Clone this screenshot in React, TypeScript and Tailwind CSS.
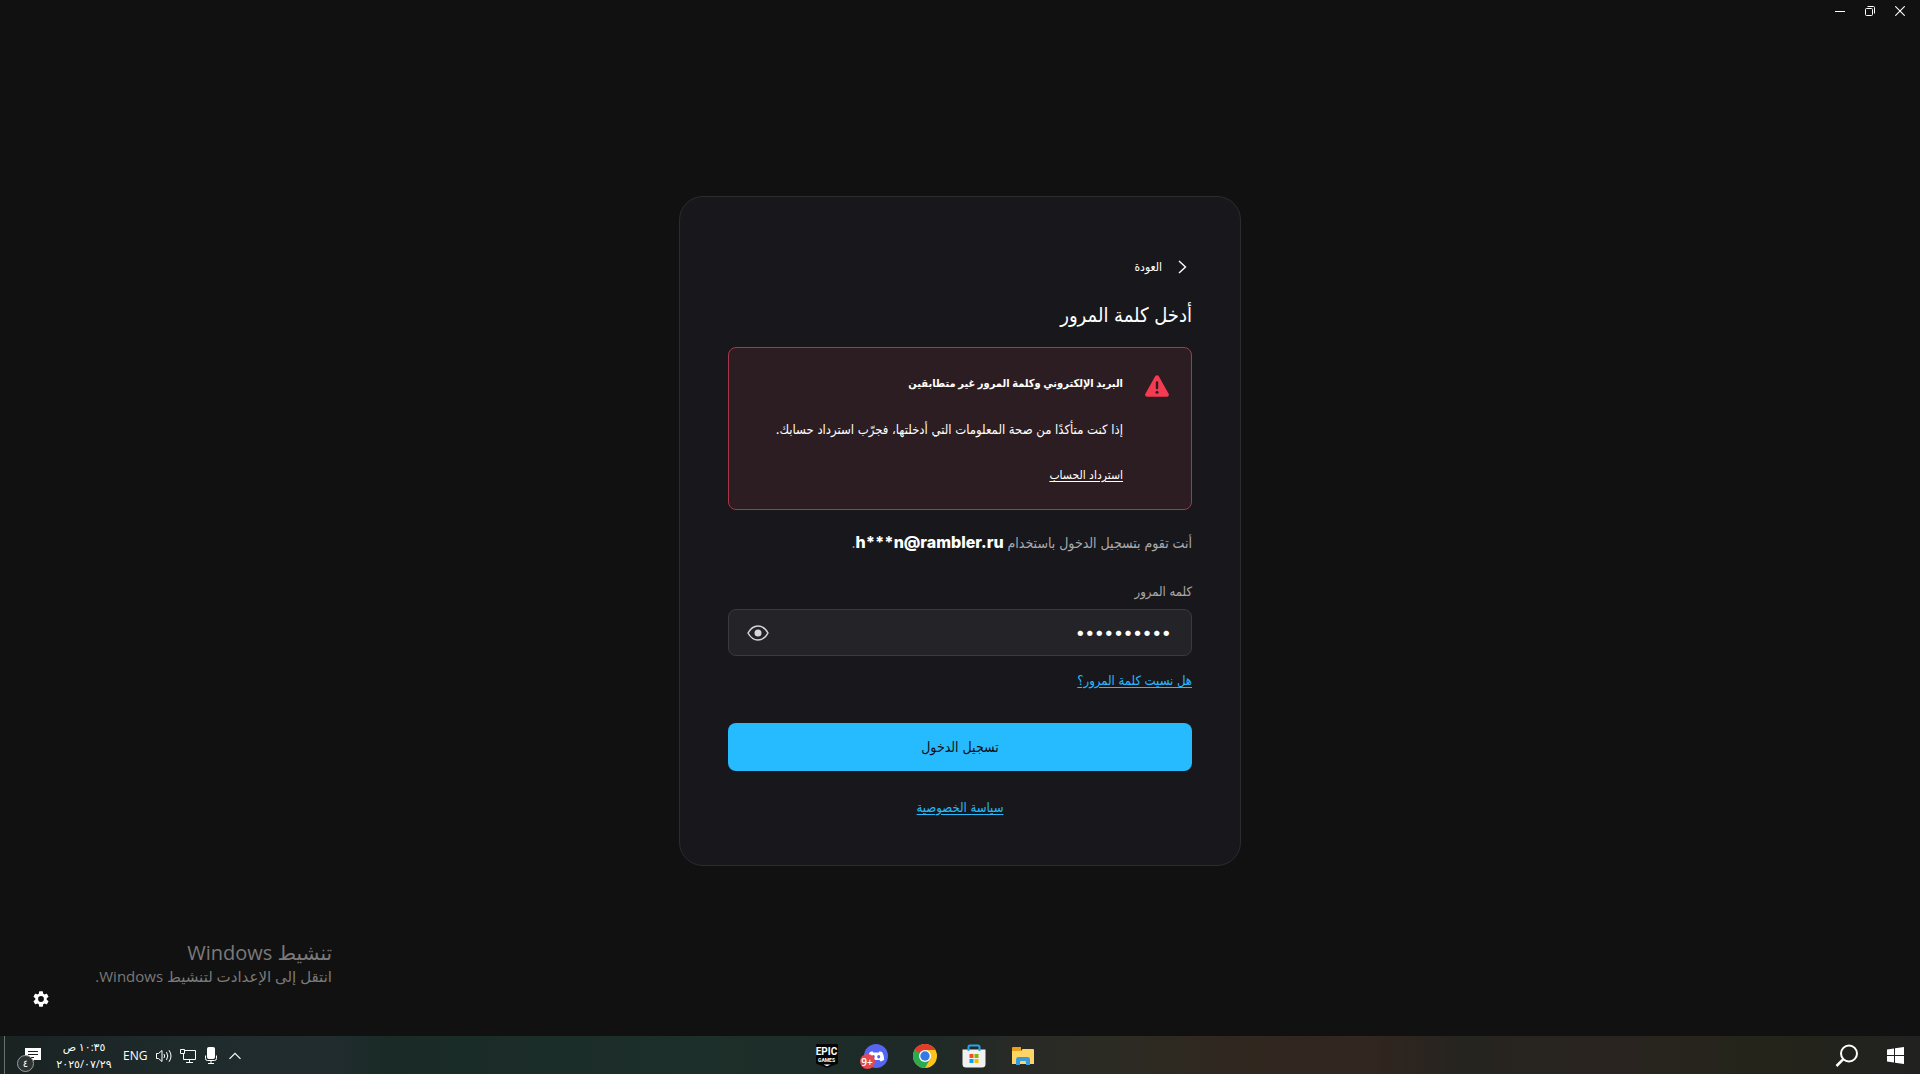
import { useState, type ReactNode } from "react";

const ARABIC = "font-['Inter','DejaVu_Sans_Condensed','DejaVu_Sans',sans-serif]";
const SEGOE = "font-['Open_Sans','DejaVu_Sans',sans-serif]";

function TitleBar() {
  return (
    <header dir="ltr" className="flex h-[22px] items-center justify-end gap-5 pr-[15px] text-white">
      <button type="button" aria-label="Minimize">
        <svg width="10" height="10" viewBox="0 0 10 10" fill="none" stroke="currentColor">
          <path d="M0 5.5h10" />
        </svg>
      </button>
      <button type="button" aria-label="Restore">
        <svg width="10" height="10" viewBox="0 0 10 10" fill="none" stroke="currentColor">
          <rect x="0.5" y="2.5" width="7" height="7" rx="1" />
          <path d="M2.5 0.5h6a1 1 0 0 1 1 1v6" />
        </svg>
      </button>
      <button type="button" aria-label="Close">
        <svg width="10" height="10" viewBox="0 0 10 10" fill="none" stroke="currentColor" strokeWidth="1.1">
          <path d="M0.3 0.3l9.4 9.4M9.7 0.3L0.3 9.7" />
        </svg>
      </button>
    </header>
  );
}

function WarningIcon() {
  return (
    <svg className="shrink-0" width="24" height="22" viewBox="0 0 24 22" aria-hidden="true">
      <path d="M10.3 1.1a2 2 0 0 1 3.4 0l9.9 17.7a2 2 0 0 1-1.7 3H2.1a2 2 0 0 1-1.7-3z" fill="#f43b52" />
      <path d="M12 7.5v5.5" stroke="#2c1d22" strokeWidth="2.4" strokeLinecap="round" />
      <circle cx="12" cy="17.2" r="1.5" fill="#2c1d22" />
    </svg>
  );
}

function Alert() {
  return (
    <section role="alert" className="mt-[15px] flex gap-[22px] rounded-lg border border-[#a8374a] bg-[#2b1d22] px-[22px] pt-[23px] pb-[22px] text-white">
      <div className="pt-1">
        <WarningIcon />
      </div>
      <div className="flex flex-col items-start gap-[22px] text-[13px] leading-6">
        <h2 className="text-[11px] leading-6 font-bold">البريد الإلكتروني وكلمة المرور غير متطابقين</h2>
        <p>إذا كنت متأكدًا من صحة المعلومات التي أدخلتها، فجرّب استرداد حسابك.</p>
        <a href="#recover" className="text-xs leading-6 underline underline-offset-2">استرداد الحساب</a>
      </div>
    </section>
  );
}

function LoginCard() {
  const [password, setPassword] = useState("password12");
  const [visible, setVisible] = useState(false);
  return (
    <form
      dir="rtl"
      onSubmit={(e) => e.preventDefault()}
      className={`flex w-full max-w-[562px] flex-col rounded-3xl border border-[#2c2c30] bg-[#18181c] px-12 pt-[58px] pb-[46px] ${ARABIC}`}
    >
      <button type="button" className="flex items-center gap-4 self-start pr-[5px] text-xs leading-6 text-white">
        <svg width="9" height="14" viewBox="0 0 9 14" fill="none" stroke="currentColor" strokeWidth="1.4" aria-hidden="true">
          <path d="M1 1l6.5 6L1 13" />
        </svg>
        العودة
      </button>
      <h1 className="mt-[19px] text-xl leading-[34px] text-white">أدخل كلمة المرور</h1>
      <Alert />
      <p className="mt-5 text-sm leading-6 text-[#a9a9ad]">
        أنت تقوم بتسجيل الدخول باستخدام <bdi className="text-base leading-6 font-extrabold text-white">h***n@rambler.ru</bdi>.
      </p>
      <label htmlFor="password" className="mt-6 text-[13px] leading-6 text-[#a9a9ad]">كلمه المرور</label>
      <div className="mt-[6px] flex h-[47px] items-center rounded-lg border border-[#3a3a3f] bg-[#242428] pr-5 pl-[18px]">
        <input
          id="password"
          type={visible ? "text" : "password"}
          value={password}
          onChange={(e) => setPassword(e.target.value)}
          className="min-w-0 flex-1 bg-transparent text-[17px] text-white outline-none"
        />
        <button type="button" aria-label="إظهار كلمة المرور" onClick={() => setVisible(!visible)} className="text-[#d6d6d8]">
          <svg width="22" height="16" viewBox="0 0 22 16" fill="none" stroke="currentColor" strokeWidth="1.5">
            <path d="M1 8C3.5 3.5 7 1 11 1s7.500 2.500 10 7c-2.500 4.500-6 7-10 7S3.500 12.500 1 8z" strokeLinejoin="round" />
            <circle cx="11" cy="8" r="3.5" fill="currentColor" stroke="none" />
          </svg>
        </button>
      </div>
      <a href="#forgot" className="mt-3 self-start text-[13px] leading-6 text-[#26bbff] underline underline-offset-2">هل نسيت كلمة المرور؟</a>
      <button type="submit" className="mt-[31px] h-12 rounded-lg bg-[#26bbff] text-sm text-[#101014]">تسجيل الدخول</button>
      <a href="#privacy" className="mt-6 self-center text-[13px] leading-6 text-[#26bbff] underline underline-offset-2">سياسة الخصوصية</a>
    </form>
  );
}

function ActivationNotice() {
  return (
    <aside className={`absolute bottom-[29px] left-8 flex w-[300px] flex-col gap-[3px] text-[#7a7a7a] ${SEGOE}`}>
      <div dir="rtl">
        <p className="text-xl leading-[22px]">تنشيط Windows</p>
        <p className="text-[15px] leading-6">انتقل إلى الإعدادت لتنشيط Windows.</p>
      </div>
      <button type="button" aria-label="الإعدادات" className="ml-px self-start text-white">
        <svg width="16" height="16" viewBox="2 2 20 20" fill="currentColor">
          <path d="M19.14 12.94c.04-.3.06-.61.06-.94s-.02-.64-.07-.94l2.03-1.58a.49.49 0 0 0 .12-.61l-1.92-3.32a.49.49 0 0 0-.59-.22l-2.39.96a7 7 0 0 0-1.62-.94l-.36-2.54A.48.48 0 0 0 13.92 2.4h-3.84a.47.47 0 0 0-.47.41l-.36 2.54c-.59.24-1.13.57-1.62.94l-2.39-.96a.48.48 0 0 0-.59.22L2.74 8.87a.47.47 0 0 0 .12.61l2.03 1.58c-.05.3-.09.63-.09.94s.02.64.07.94l-2.03 1.58a.49.49 0 0 0-.12.61l1.92 3.32c.12.22.37.29.59.22l2.39-.96c.5.38 1.03.7 1.62.94l.36 2.54c.05.24.24.41.48.41h3.84c.24 0 .44-.17.47-.41l.36-2.54a7 7 0 0 0 1.62-.94l2.39.96c.22.08.47 0 .59-.22l1.92-3.32a.47.47 0 0 0-.12-.61zM12 15.6a3.6 3.6 0 1 1 0-7.2 3.6 3.6 0 0 1 0 7.2z" />
        </svg>
      </button>
    </aside>
  );
}

function TaskButton({ label, children }: { label: string; children: ReactNode }) {
  return (
    <button type="button" aria-label={label} className="relative flex w-6 items-center justify-center">
      {children}
    </button>
  );
}

function EpicIcon() {
  return (
    <span className="relative flex flex-col items-center">
      <svg width="22" height="24" viewBox="0 0 22 24">
        <path d="M0 1a1 1 0 0 1 1-1h20a1 1 0 0 1 1 1v18.500L11 24 0 19.500z" fill="#050505" />
        <path d="M7.500 20.500h7L11 22.200z" fill="#fff" />
      </svg>
      <span dir="ltr" className="absolute inset-x-0 top-[2px] text-center font-['Roboto'] text-[10px] leading-3 font-bold">EPIC</span>
      <span dir="ltr" className="absolute inset-x-0 top-[14px] text-center font-['Roboto'] text-[5px] leading-[5px] font-bold">GAMES</span>
    </span>
  );
}

function DiscordIcon() {
  return (
    <svg width="24" height="24" viewBox="1 0 24 24">
      <circle cx="13" cy="12" r="12" fill="#5865f2" />
      <path d="M9.500 7.200q-1.700.3-2.800 1c-1.200 2.200-1.900 4.700-1.800 7.600 1.200 1 2.400 1.400 3.500 1.700l1-1.500h7.200l1 1.500c1.100-.3 2.300-.7 3.500-1.700.1-2.900-.6-5.400-1.800-7.600q-1.100-.7-2.800-1l-.6 1.200h-5.800z" fill="#fff" />
      <ellipse cx="10.3" cy="12.7" rx="1.5" ry="1.7" fill="#5865f2" />
      <ellipse cx="15.7" cy="12.7" rx="1.5" ry="1.7" fill="#5865f2" />
    </svg>
  );
}

function ChromeIcon() {
  return (
    <svg width="24" height="24" viewBox="0 0 24 24">
      <circle cx="12" cy="12" r="12" fill="#fcc31e" />
      <path d="M12 12L6.8 15 1.6 6A12 12 0 0 1 22.400 6H12z" fill="#e33b2e" />
      <path d="M1.6 6A12 12 0 0 0 12 24l5.200-9H12z" fill="#2da94f" />
      <path d="M1.6 6l5.200 9L12 12z" fill="#2da94f" />
      <circle cx="12" cy="12" r="6" fill="#fff" />
      <circle cx="12" cy="12" r="4.7" fill="#3479e8" />
    </svg>
  );
}

function StoreIcon() {
  return (
    <svg width="24" height="24" viewBox="0 0 24 24">
      <path d="M.5 5.500h23V20a3.500 3.500 0 0 1-3.500 3.500H4A3.500 3.500 0 0 1 .5 20z" fill="#f1f1f1" />
      <path d="M6.500 7V3A1.500 1.500 0 0 1 8 1.500h8A1.500 1.500 0 0 1 17.500 3v4" fill="none" stroke="#27a5ea" strokeWidth="2" />
      <path d="M7.500 10h4v4h-4z" fill="#f25022" />
      <path d="M12.500 10h4v4h-4z" fill="#7fba00" />
      <path d="M7.500 15h4v4h-4z" fill="#00a4ef" />
      <path d="M12.500 15h4v4h-4z" fill="#ffb900" />
    </svg>
  );
}

function FolderIcon() {
  return (
    <svg width="22" height="20" viewBox="0 0 22 20">
      <path d="M0 2a1 1 0 0 1 1-1h8v4H0z" fill="#e9a21c" />
      <path d="M0 5h9l1.500-2H21a1 1 0 0 1 1 1v14H0z" fill="#ffd467" />
      <path d="M4 19v-5.500A2.500 2.500 0 0 1 6.500 11h9a2.500 2.500 0 0 1 2.500 2.500V19h-4v-3a1 1 0 0 0-1-1H9a1 1 0 0 0-1 1v3z" fill="#3a9bdc" />
    </svg>
  );
}

function Taskbar() {
  return (
    <footer
      dir="rtl"
      className={`grid h-[38px] grid-cols-[1fr_auto_1fr] items-center bg-[linear-gradient(90deg,#1a2222_0%,#1f2b2b_10%,#212c2f_17%,#1a2b27_20%,#1d2f2a_37%,#1d2a27_48%,#292a26_53%,#2c2b23_58%,#30271f_65%,#322620_71%,#26241f_76%,#2a2420_84%,#24241a_92%,#212120_100%)] text-white ${SEGOE}`}
    >
      <div className="flex items-center gap-7 pt-px pr-4">
        <button type="button" aria-label="ابدأ">
          <svg width="17" height="17" viewBox="0 0 17 17" fill="#fff">
            <path d="M0 2.500L7 1.500V8H0zM8 1.300L17 0v8H8zM0 9h7v6.500L0 14.500zM8 9h9v8L8 15.700z" />
          </svg>
        </button>
        <button type="button" aria-label="بحث">
          <svg width="24" height="24" viewBox="0 0 24 24" fill="none" stroke="#fff" strokeWidth="2">
            <circle cx="14" cy="9.500" r="8" />
            <path d="M8.300 15.200L1.500 22" strokeWidth="2.5" />
          </svg>
        </button>
      </div>
      <div className="flex items-center gap-[25px] pt-[2px] pr-[71px]">
        <TaskButton label="مستكشف الملفات"><FolderIcon /></TaskButton>
        <TaskButton label="Microsoft Store"><StoreIcon /></TaskButton>
        <TaskButton label="Google Chrome"><ChromeIcon /></TaskButton>
        <TaskButton label="Discord">
          <DiscordIcon />
          <span dir="ltr" className="absolute -bottom-px -left-1 flex size-[15px] items-center justify-center rounded-full bg-[#e5484d] text-[10px] leading-none font-semibold">9+</span>
        </TaskButton>
        <TaskButton label="Epic Games"><EpicIcon /></TaskButton>
      </div>
      <div dir="ltr" className="flex h-full items-center">
        <div className="ml-1 h-full w-px bg-[#6b7170]" />
        <button type="button" aria-label="الإشعارات" className="relative mt-px ml-5">
          <svg width="16" height="16" viewBox="0 0 16 16">
            <path d="M0 0h16v12H9l-3 3.500V12H0z" fill="#fff" />
            <path d="M3 3.500h10M3 6.500h10M3 9.500h6" stroke="#1a2222" />
          </svg>
          <span className="absolute top-[7px] -left-2 flex size-[17px] items-center justify-center rounded-full border border-[#9b9f9e] bg-[#2e3333] text-[10px] leading-none">٤</span>
        </button>
        <div dir="rtl" className="ml-[15px] w-14 text-center text-[11px] leading-[17px] whitespace-nowrap">
          <div>١٠:٣٥ ص</div>
          <bdo dir="ltr" className="block">٢٠٢٥/٠٧/٢٩</bdo>
        </div>
        <span className="mt-px ml-[11px] text-xs">ENG</span>
        <div className="mt-px ml-[9px] flex items-center gap-[7px]">
          <svg width="17" height="14" viewBox="0 0 17 14" fill="none" stroke="#fff">
            <path d="M.5 4.500h2L6 1.500v11l-3.500-3h-2z" />
            <path d="M8 5q1.200 2 0 4M10.500 3q2.500 4 0 8M13 1.200q4 5.800 0 11.600" />
          </svg>
          <svg width="16" height="14" viewBox="0 0 16 14" fill="none" stroke="#fff">
            <path d="M5 1.500h10.500v9H3.500V5M9.500 10.500v3M6 13.500h7M.5 .5h4v4h-4z" />
          </svg>
          <svg className="ml-[2px]" width="12" height="17" viewBox="0 0 12 17" fill="none" stroke="#fff">
            <rect x="2.5" y=".5" width="7" height="11" rx="1" fill="#fff" />
            <path d="M.5 8.500v3q0 2 2 2h7q2 0 2-2v-3M6 13.500v3M3 16.500h6" />
          </svg>
          <svg className="ml-[5px]" width="12" height="8" viewBox="0 0 12 8" fill="none" stroke="#fff" strokeWidth="1.2">
            <path d="M.5 6.800L6 1.300l5.500 5.500" />
          </svg>
        </div>
      </div>
    </footer>
  );
}

export default function App() {
  return (
    <div className="flex min-h-screen flex-col bg-[#111111]">
      <TitleBar />
      <main className="relative flex flex-1 items-center justify-center pt-1">
        <LoginCard />
        <ActivationNotice />
      </main>
      <Taskbar />
    </div>
  );
}
